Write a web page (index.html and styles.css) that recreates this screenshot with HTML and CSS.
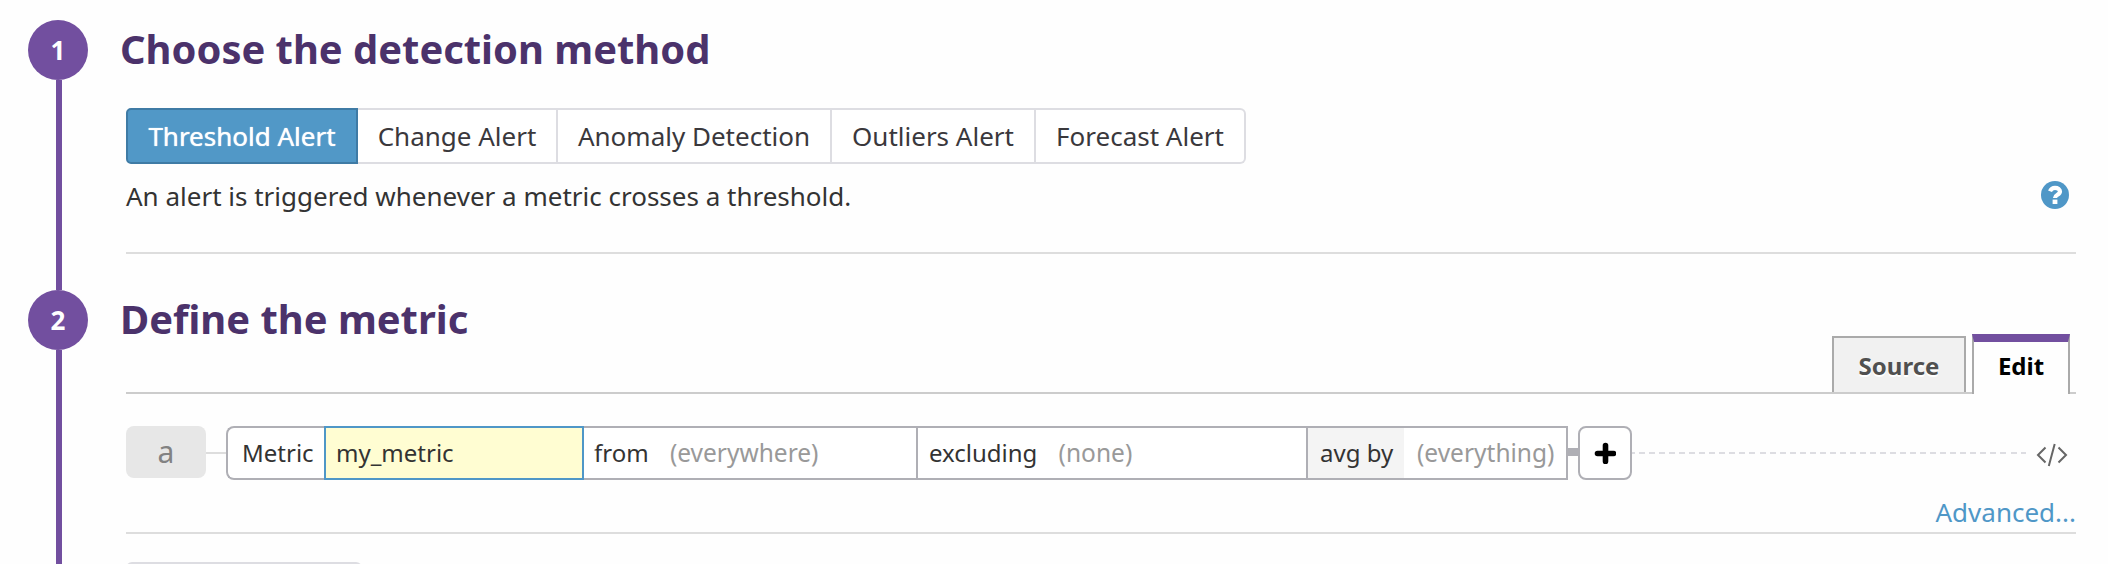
FILE: index.html
```html
<!DOCTYPE html>
<html lang="en">
<head>
<meta charset="utf-8">
<title>New monitor</title>
<link rel="stylesheet" href="styles.css">
</head>
<body>
<main class="steps">
  <section class="step step-method">
    <div class="rail"><span class="number">1</span><span class="line"></span></div>
    <div class="content">
      <h2 class="title">Choose the detection method</h2>
      <div class="methods">
        <button class="method active">Threshold Alert</button>
        <button class="method change">Change Alert</button>
        <button class="method anomaly">Anomaly Detection</button>
        <button class="method outliers">Outliers Alert</button>
        <button class="method forecast">Forecast Alert</button>
      </div>
      <div class="summary">
        <p class="description">An alert is triggered whenever a metric crosses a threshold.</p>
        <svg class="help" viewBox="0 0 28 28" width="28" height="28"><circle cx="14" cy="14" r="14" fill="#4f97c7"/><path d="M9 10.200C10 7.800 11.800 6.800 14 6.800c2.900 0 5 1.500 5 3.700 0 3.300-5 3.200-5 6.400" fill="none" stroke="#fff" stroke-width="4.200"/><rect x="11.600" y="18.600" width="4.800" height="4.400" fill="#fff"/></svg>
      </div>
    </div>
  </section>
  <section class="step step-metric">
    <div class="rail"><span class="number">2</span><span class="line"></span></div>
    <div class="content">
      <h2 class="title">Define the metric</h2>
      <div class="tabs">
        <button class="tab source">Source</button>
        <button class="tab edit">Edit</button>
      </div>
      <div class="query">
        <span class="query-name">a</span>
        <span class="link"></span>
        <div class="fields">
          <span class="field metric-label">Metric</span>
          <span class="field metric-name">my_metric</span>
          <span class="field from">from <span class="hint">(everywhere)</span></span>
          <span class="field excluding">excluding <span class="hint">(none)</span></span>
          <span class="field aggregate">avg by</span>
          <span class="field group"><span class="hint">(everything)</span></span>
        </div>
        <span class="thick-link"></span>
        <button class="add"><svg viewBox="0 0 22 22" width="22" height="22"><path d="M11.500 3.500v16M3.500 11.500h16" fill="none" stroke="#000" stroke-width="5.600" stroke-linecap="round"/></svg></button>
        <span class="dashes"></span>
        <svg class="code" viewBox="0 0 32 24" width="32" height="24"><path d="M9.500 4.500L2 12l7.500 7.500M22.500 4.500L30 12l-7.500 7.500M18.700 1l-5.900 22" fill="none" stroke="#666" stroke-width="2"/></svg>
      </div>
      <a class="advanced">Advanced...</a>
      <div class="next-box"></div>
    </div>
  </section>
</main>
</body>
</html>
```
FILE: styles.css
```css
* { box-sizing: border-box; }
body {
  margin: 0;
  background: #fefefe;
  color: #333;
  font-family: "Noto Sans", "Open Sans", sans-serif;
  font-size: 26px;
}
button { font: inherit; margin: 0; padding: 0; }
.steps { height: 564px; overflow: hidden; padding: 20px 32px 0 28px; }
.step { display: flex; gap: 38px; }
.step-method { height: 270px; }
.step-metric { height: 274px; }
.rail { width: 60px; display: flex; flex-direction: column; }
.number {
  width: 60px; height: 60px; flex: none;
  border-radius: 50%;
  background: #724f9f; color: #fff;
  font-size: 26px; font-weight: 700; line-height: 60px; text-align: center;
}
.line { width: 6px; flex: 1; margin-left: 28px; background: #724f9f; }
.content { flex: 1; min-width: 0; }
.title {
  margin: 0 0 0 -6px; height: 60px;
  font-size: 39.9px; line-height: 57px; font-weight: 700; color: #4b326b;
  white-space: nowrap;
}
.methods { display: flex; width: 1120px; height: 56px; margin-top: 28px; }
.method {
  border: 2px solid #dddde2; border-left: 0;
  background: #fff; color: #3a383c;
  line-height: 52px; white-space: nowrap;
}
.method.active {
  width: 232px; border: 2px solid #3f7ba5; border-radius: 5px 0 0 5px;
  background: #5198c7; color: #fff; text-shadow: 0 0 1px #fff;
}
.change { width: 200px; }
.anomaly { width: 274px; }
.outliers { width: 204px; }
.forecast { width: 210px; border-radius: 0 6px 6px 0; }
.summary {
  display: flex; justify-content: space-between; align-items: center;
  height: 90px; padding: 0 7px 28px 0;
  border-bottom: 2px solid #ddd;
}
.description { margin: 4px 0 0; white-space: nowrap; }
.help { margin-top: 2px; }
.tabs {
  display: flex; justify-content: flex-end; align-items: flex-end; gap: 6px;
  height: 44px; padding-right: 6px; border-bottom: 2px solid #ccc;
}
.tab { flex: none; font-size: 24px; font-weight: 700; border: 2px solid #aaa; border-bottom: 0; }
.source { width: 134px; height: 56px; background: #f1f1f1; color: #505050; text-shadow: 0 2px 0 #fff; }
.edit {
  width: 98px; height: 60px; margin-bottom: -2px;
  border-top: 8px solid #724f9f; background: #fefefe; color: #000;
  padding-bottom: 6px;
}
.query { display: flex; align-items: flex-start; height: 54px; margin-top: 32px; }
.query-name {
  width: 80px; height: 52px; border-radius: 8px;
  background: #e7e7e7; color: #828282;
  font-size: 30px; line-height: 51px; text-align: center;
}
.link { width: 20px; height: 2px; margin-top: 26px; background: #ddd; }
.fields { display: flex; width: 1342px; height: 54px; font-size: 24px; line-height: 50px; white-space: nowrap; }
.field { border: solid #afafb5; border-width: 2px 0; background: #fff; }
.metric-label { width: 98px; border-left-width: 2px; border-radius: 8px 0 0 8px; padding-left: 14px; }
.metric-name { width: 260px; border: 2px solid #4f97c7; background: #fffdd2; padding-left: 10px; }
.from { width: 334px; border-right-width: 2px; padding-left: 10px; }
.excluding { width: 390px; border-right-width: 2px; padding-left: 11px; }
.aggregate { width: 96px; background: #f4f4f4; padding-left: 12px; }
.group { width: 164px; border-right-width: 2px; padding-left: 13px; }
.hint { color: #999; font-size: 24.5px; }
.from .hint, .excluding .hint { margin-left: 15px; }
.thick-link { width: 10px; height: 8px; margin-top: 22px; background: #afafb5; }
.add {
  width: 54px; height: 54px; border: 2px solid #afafb5; border-radius: 8px;
  background: #fff; display: flex; align-items: center; justify-content: center;
}
.dashes {
  width: 394px; height: 2px; margin-top: 26px;
  background: repeating-linear-gradient(90deg, #dddde2 0 3px, transparent 3px 7.040px, #dddde2 7.040px 10.040px);
}
.code { margin: 17px 0 0 10px; }
.advanced {
  display: block; height: 54px; border-bottom: 2px solid #ddd;
  color: #4f97c7; text-align: right; line-height: 65px;
}
.next-box { width: 236px; height: 30px; margin-top: 28px; border: 2px solid #dddde2; border-radius: 6px; background: #f4f4f4; }
```
